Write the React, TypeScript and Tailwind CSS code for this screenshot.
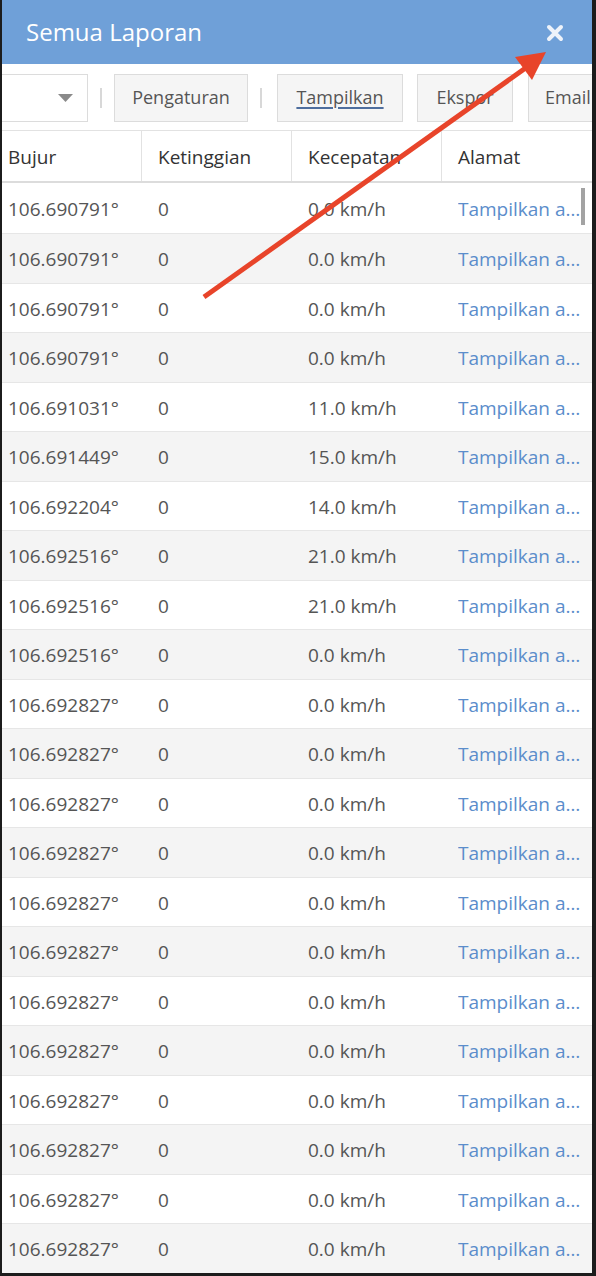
import React from "react";

const rows: { lon: string; speed: string }[] = [
  { lon: "106.690791°", speed: "0.0 km/h" },
  { lon: "106.690791°", speed: "0.0 km/h" },
  { lon: "106.690791°", speed: "0.0 km/h" },
  { lon: "106.690791°", speed: "0.0 km/h" },
  { lon: "106.691031°", speed: "11.0 km/h" },
  { lon: "106.691449°", speed: "15.0 km/h" },
  { lon: "106.692204°", speed: "14.0 km/h" },
  { lon: "106.692516°", speed: "21.0 km/h" },
  { lon: "106.692516°", speed: "21.0 km/h" },
  { lon: "106.692516°", speed: "0.0 km/h" },
  ...Array.from({ length: 12 }, () => ({ lon: "106.692827°", speed: "0.0 km/h" })),
];

const App = () => {
  return (
    <div
      className="w-[596px] h-[1276px] bg-[#1c1c1c] pl-[2px] pr-[4px] pb-[3px] overflow-hidden"
      style={{ fontFamily: "'Open Sans', 'Noto Sans', sans-serif" }}
    >
      <div className="relative h-full bg-white overflow-hidden">
        {/* Title bar */}
        <div className="h-[64px] bg-[#6fa0d8] flex items-center justify-between pl-[24px] pr-[28px]">
          <span className="text-[24px] text-white leading-none">Semua Laporan</span>
          <svg width="18" height="18" viewBox="0 0 18 18" className="mt-[1px]">
            <path d="M3 3 L15 15 M15 3 L3 15" stroke="#eef3fa" strokeWidth="4" strokeLinecap="round" />
          </svg>
        </div>

        {/* Toolbar */}
        <div className="h-[67px] flex items-center gap-[12px] ml-[-20px] pt-[1px] border-b border-[#e2e2e2]">
          <div className="w-[106px] h-[48px] shrink-0 border-[1.5px] border-[#dcdcdc] bg-white flex items-center justify-end pr-[14px]">
            <svg width="15" height="8" viewBox="0 0 15 8">
              <path d="M0 0 L15 0 L7.5 8 Z" fill="#8a8a8a" />
            </svg>
          </div>
          <div className="w-[2px] h-[20px] bg-[#d8d8d8] shrink-0" />
          <button className="h-[48px] w-[134px] shrink-0 border-[1.5px] border-[#dcdcdc] bg-[#f5f5f5] text-[18px] text-[#555]">
            Pengaturan
          </button>
          <div className="w-[2px] h-[20px] bg-[#d8d8d8] shrink-0" />
          <button className="h-[48px] w-[126px] shrink-0 ml-[3px] border-[1.5px] border-[#dcdcdc] bg-[#f5f5f5] text-[18px] text-[#555] underline decoration-[#4e6e9e] decoration-[1.5px] underline-offset-[3px]">
            Tampilkan
          </button>
          <button className="h-[48px] w-[96px] shrink-0 ml-[2px] border-[1.5px] border-[#dcdcdc] bg-[#f5f5f5] text-[18px] text-[#555]">
            Ekspor
          </button>
          <button className="h-[48px] w-[96px] shrink-0 ml-[3px] border-[1.5px] border-[#dcdcdc] bg-[#f5f5f5] text-[18px] text-[#555] text-left pl-[16px]">
            Email
          </button>
        </div>

        {/* Table */}
        <div className="ml-[-10px]">
          <div className="flex h-[52px] border-b-[2px] border-[#dcdcdc] text-[19px] text-[#333]">
            {["Bujur", "Ketinggian", "Kecepatan", "Alamat"].map((h, i) => (
              <div
                key={h}
                className={`w-[150px] shrink-0 flex items-center pl-[16px] pt-[2px] ${i < 3 ? "border-r-[1.5px] border-[#e2e2e2]" : ""}`}
              >
                {h}
              </div>
            ))}
          </div>
          {rows.map((r, i) => (
            <div
              key={i}
              className={`flex border-b border-[#e6e6e6] text-[19px] text-[#555] pt-[2px] ${i % 2 === 1 ? "bg-[#f4f4f4]" : "bg-white"} ${i === 0 ? "h-[51px]" : "h-[49.5px]"}`}
            >
              <div className="w-[150px] shrink-0 flex items-center pl-[16px]">{r.lon}</div>
              <div className="w-[150px] shrink-0 flex items-center pl-[16px]">0</div>
              <div className="w-[150px] shrink-0 flex items-center pl-[16px]">{r.speed}</div>
              <div className="w-[150px] shrink-0 flex items-center pl-[16px] text-[#5b8dcb]">
                <span className="block w-[127px] overflow-hidden text-ellipsis whitespace-nowrap">
                  Tampilkan alamat
                </span>
              </div>
            </div>
          ))}
        </div>

        {/* Scrollbar thumb */}
        <div className="absolute left-[579px] top-[188px] w-[4px] h-[37px] bg-[#a3a3a3]" />

        {/* Annotation arrow */}
        <svg className="absolute left-0 top-0 pointer-events-none" width="590" height="320" viewBox="0 0 590 320">
          <line x1="202" y1="297" x2="525" y2="67" stroke="#e8442a" strokeWidth="5" strokeLinecap="butt" />
          <path d="M544 52 L513 57 L530 80 Z" fill="#e8442a" />
        </svg>
      </div>
    </div>
  );
};

export default App;
